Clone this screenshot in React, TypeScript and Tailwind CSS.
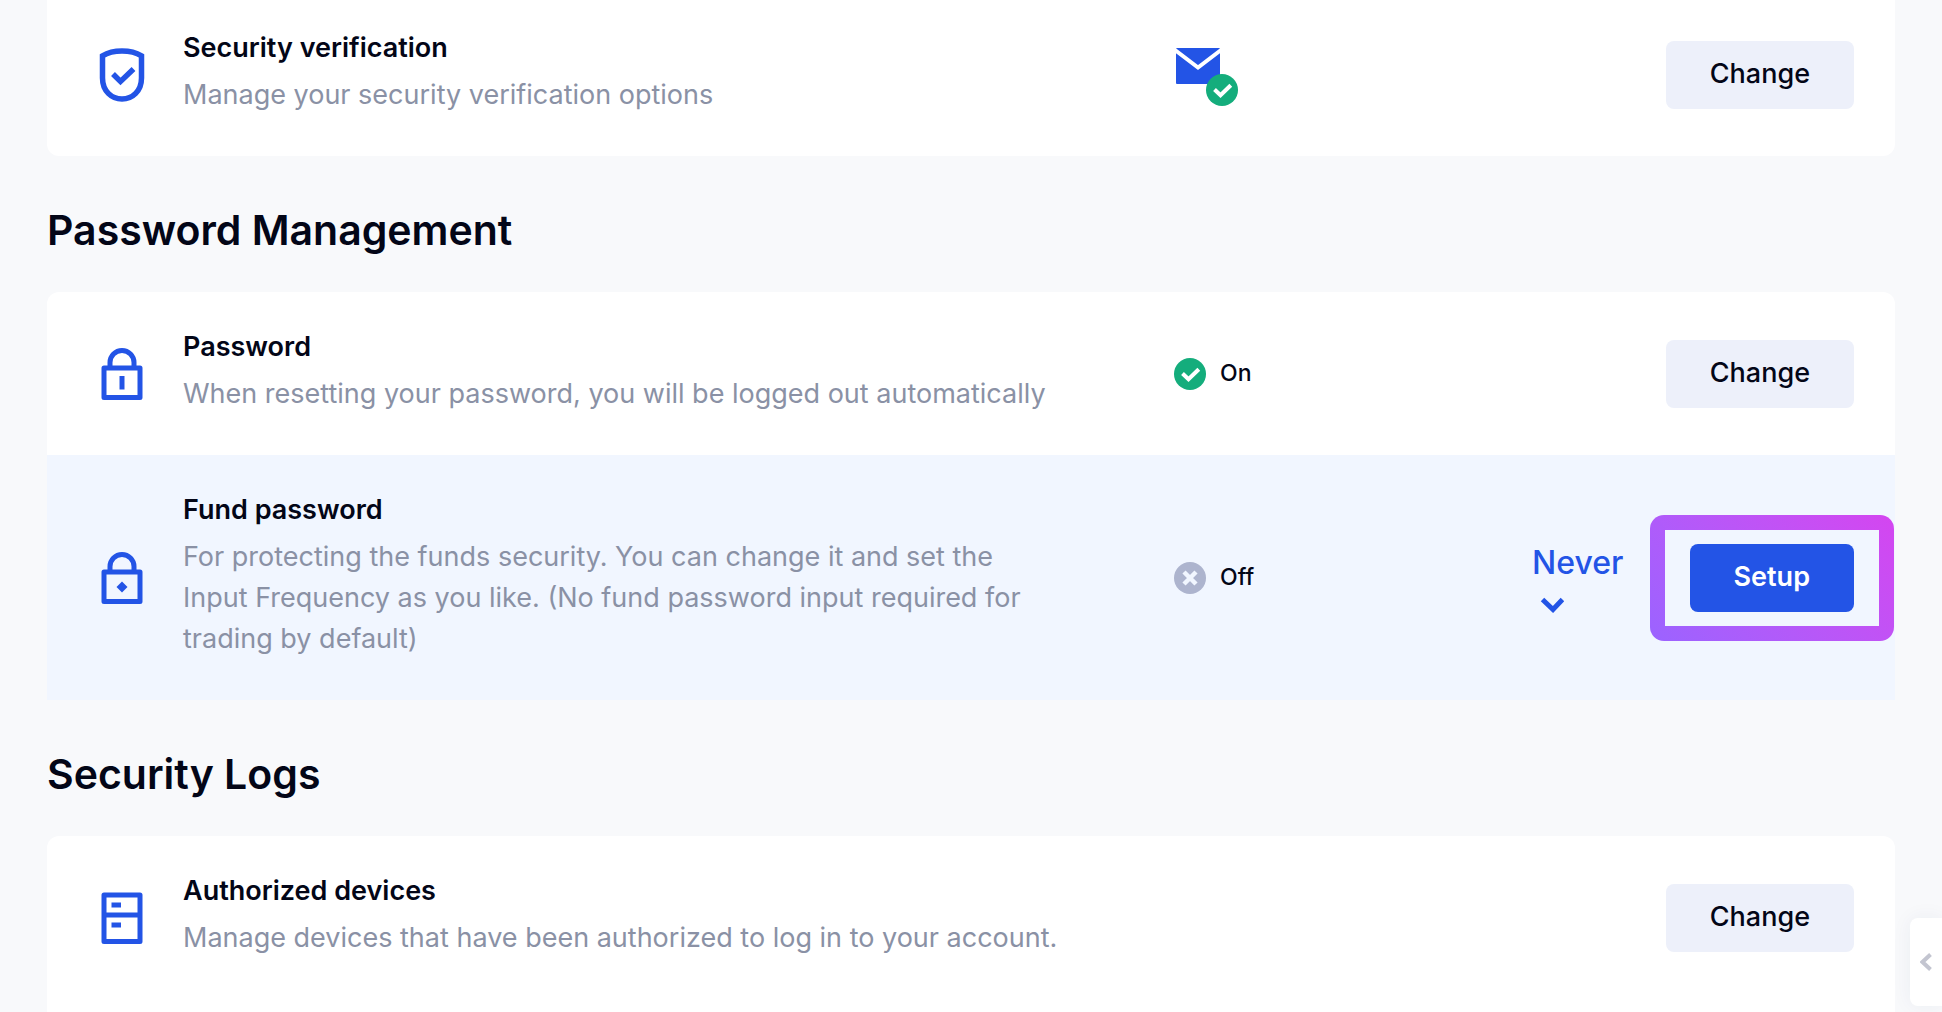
import { useState } from 'react';
import type { ReactNode } from 'react';

type RowProps = {
  icon: ReactNode;
  title: string;
  description: string;
  status?: ReactNode;
  highlighted?: boolean;
  children: ReactNode;
};

const ShieldIcon = () => (
  <svg viewBox="0 0 68 68" className="size-[68px] shrink-0" fill="none" stroke="#2354e6" strokeWidth="5.5" aria-hidden="true">
    <path d="M14.5 14.8C25 8.4 43 8.4 53.5 14.8V37C53.5 50 44.5 58 34 58S14.5 50 14.5 37Z" />
    <path d="M25 33L32.5 40.5L45.5 28" />
  </svg>
);

const LockIcon = ({ children }: { children: ReactNode }) => (
  <svg viewBox="0 0 68 68" className="size-[68px] shrink-0" fill="none" stroke="#2354e6" strokeWidth="5" aria-hidden="true">
    <rect x="16" y="28" width="36" height="29.5" strokeLinejoin="round" />
    <path d="M22 28V22.5A12 12 0 0 1 46 22.5V28" />
    {children}
  </svg>
);

const CabinetIcon = () => (
  <svg viewBox="0 0 68 68" className="size-[68px] shrink-0" fill="none" stroke="#2354e6" strokeWidth="5" aria-hidden="true">
    <rect x="16" y="11" width="36" height="46.500" strokeLinejoin="round" />
    <path d="M16 31H52M23.5 21H33M23.5 41H33" />
  </svg>
);

const CheckBadge = () => (
  <svg viewBox="0 0 32 32" className="size-8 shrink-0" fill="none" aria-hidden="true">
    <circle cx="16" cy="16" r="16" fill="#14ad7c" />
    <path d="M8.5 15.5L14.5 21.3L24.8 11.2" stroke="#fff" strokeWidth="4" />
  </svg>
);

const CrossBadge = () => (
  <svg viewBox="0 0 32 32" className="size-8 shrink-0" fill="none" aria-hidden="true">
    <circle cx="16" cy="16" r="16" fill="#adb4ce" />
    <path d="M10 10L22 22M22 10L10 22" stroke="#f1f6ff" strokeWidth="4.5" />
  </svg>
);

const MailVerified = () => (
  <svg viewBox="0 0 64 64" className="size-16" fill="none" role="img" aria-label="Email verified">
    <rect x="2" y="5" width="44" height="36" rx="1" fill="#2354e6" />
    <path d="M1 7L24 24.5L47 7" stroke="#fff" strokeWidth="4" />
    <circle cx="48" cy="47" r="16" fill="#14ad7c" />
    <path d="M40.5 46.5L46.5 52.3L56.8 42.2" stroke="#fff" strokeWidth="4" />
  </svg>
);

const ChangeButton = () => (
  <button
    type="button"
    className="h-[68px] rounded-lg bg-[#edf0fa] px-11 text-[27px] font-medium"
  >
    Change
  </button>
);

const Heading = ({ children }: { children: ReactNode }) => (
  <h2 className="mt-11 mb-8 text-[41px] leading-[60px] font-semibold">{children}</h2>
);

function Row({ icon, title, description, status, highlighted, children }: RowProps) {
  return (
    <div className={`flex items-center px-[41px] ${highlighted ? 'bg-[#f1f6ff]' : ''}`}>
      {icon}
      <div className="ml-[27px] min-w-0 flex-1 pt-[34px] pr-28 pb-[41px] text-[27px] leading-[41px]">
        <h3 className="mb-1.5 font-semibold">{title}</h3>
        <p className="text-[#8a91a5]">{description}</p>
      </div>
      <div className="flex w-[358px] items-center gap-3.5 text-[23px] font-medium">{status}</div>
      <div className="flex w-[322px] items-center justify-end">{children}</div>
    </div>
  );
}

function App() {
  const [frequency, setFrequency] = useState('never');

  return (
    <main className="flex min-h-screen flex-col overflow-hidden bg-[#f8f9fb] px-[47px] font-['Inter',sans-serif] text-[#030617]">
      <section className="-mt-[7px] rounded-b-xl bg-white">
        <Row
          icon={<ShieldIcon />}
          title="Security verification"
          description="Manage your security verification options"
          status={<MailVerified />}
        >
          <ChangeButton />
        </Row>
      </section>

      <Heading>Password Management</Heading>
      <section className="rounded-t-xl bg-white">
        <Row
          icon={
            <LockIcon>
              <path d="M34 36V49.5" />
            </LockIcon>
          }
          title="Password"
          description="When resetting your password, you will be logged out automatically"
          status={
            <>
              <CheckBadge />
              On
            </>
          }
        >
          <ChangeButton />
        </Row>
        <Row
          highlighted
          icon={
            <LockIcon>
              <path d="M34 37.5L39.5 43L34 48.5L28.5 43Z" fill="#2354e6" stroke="none" />
            </LockIcon>
          }
          title="Fund password"
          description="For protecting the funds security. You can change it and set the Input Frequency as you like. (No fund password input required for trading by default)"
          status={
            <>
              <CrossBadge />
              Off
            </>
          }
        >
          <label className="mr-auto flex flex-col items-start text-[#2354e6]">
            <select
              aria-label="Input frequency"
              value={frequency}
              onChange={(event) => setFrequency(event.target.value)}
              className="appearance-none text-[32px] leading-[41px] font-medium"
            >
              <option value="never">Never</option>
            </select>
            <svg viewBox="0 0 24 16" className="mt-3.5 ml-2 h-4 w-6" fill="none" stroke="currentColor" strokeWidth="5" aria-hidden="true">
              <path d="M2.5 2.500L13 12.500L22.5 2.500" />
            </svg>
          </label>
          <div className="-mr-10 shrink-0 rounded-[14px] bg-linear-45 from-[#9b63ff] to-[#d445f0] p-[15px]">
            <div className="bg-[#f1f6ff] px-[25px] py-3.5">
              <button
                type="button"
                className="block h-[68px] rounded-lg bg-[#2354e6] px-11 text-[27px] font-semibold text-white"
              >
                Setup
              </button>
            </div>
          </div>
        </Row>
      </section>

      <Heading>Security Logs</Heading>
      <section className="flex-1 rounded-t-xl bg-white">
        <Row
          icon={<CabinetIcon />}
          title="Authorized devices"
          description="Manage devices that have been authorized to log in to your account."
        >
          <ChangeButton />
        </Row>
      </section>

      <button
        type="button"
        aria-label="Open side panel"
        className="fixed right-0 bottom-1.5 flex h-[88px] w-8 items-center rounded-l-lg bg-white pl-2.5 shadow-[0_0_20px_rgba(30,50,110,0.06)]"
      >
        <svg viewBox="0 0 12 18" className="h-[18px] w-3" fill="none" stroke="#c3c5d0" strokeWidth="4" aria-hidden="true">
          <path d="M10.5 1.5L2.5 9L10.5 16.5" />
        </svg>
      </button>
    </main>
  );
}

export default App;
